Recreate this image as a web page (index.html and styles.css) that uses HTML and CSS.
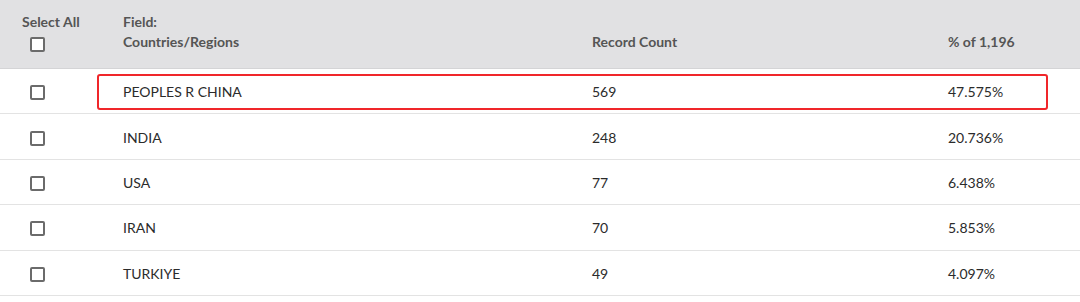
FILE: index.html
```html
<!DOCTYPE html>
<html lang="en">
<head>
<meta charset="utf-8">
<link rel="stylesheet" href="styles.css">
</head>
<body>
<div class="table">
  <div class="head">
    <div class="cell sel">
      <span class="sel-label">Select All</span>
      <span class="box"></span>
    </div>
    <div class="cell">Field:<br>Countries/Regions</div>
    <div class="cell">Record Count</div>
    <div class="cell">% of 1,196</div>
  </div>
  <div class="row highlighted">
    <div class="cell chk"><span class="box"></span></div>
    <div class="cell">PEOPLES R CHINA</div>
    <div class="cell">569</div>
    <div class="cell">47.575%</div>
    <div class="mark"></div>
  </div>
  <div class="row">
    <div class="cell chk"><span class="box"></span></div>
    <div class="cell">INDIA</div>
    <div class="cell">248</div>
    <div class="cell">20.736%</div>
  </div>
  <div class="row">
    <div class="cell chk"><span class="box"></span></div>
    <div class="cell">USA</div>
    <div class="cell">77</div>
    <div class="cell">6.438%</div>
  </div>
  <div class="row">
    <div class="cell chk"><span class="box"></span></div>
    <div class="cell">IRAN</div>
    <div class="cell">70</div>
    <div class="cell">5.853%</div>
  </div>
  <div class="row">
    <div class="cell chk"><span class="box"></span></div>
    <div class="cell">TURKIYE</div>
    <div class="cell">49</div>
    <div class="cell">4.097%</div>
  </div>
</div>
</body>
</html>
```
FILE: styles.css
```css
html, body {
  margin: 0;
  padding: 0;
  background: #ffffff;
}
body {
  font-family: Lato, "Open Sans", "Liberation Sans", sans-serif;
  font-size: 14px;
  color: #2b2b2b;
  width: 1080px;
  height: 302px;
  overflow: hidden;
}
.table {
  display: flex;
  flex-direction: column;
}
.head, .row {
  display: grid;
  grid-template-columns: 123px 469px 356px 1fr;
}
.head {
  background: #e1e1e3;
  height: 69px;
  box-sizing: border-box;
  padding: 12px 0 16px;
  align-items: end;
  border-bottom: 1px solid #d4d4d6;
  color: #555555;
  font-weight: 700;
  line-height: 20px;
}
.sel {
  display: flex;
  flex-direction: column;
  align-self: start;
  padding-left: 22px;
}
.sel .box {
  margin: 5px 0 0 8px;
}
.row {
  position: relative;
  height: 45.4px;
  box-sizing: border-box;
  border-bottom: 1px solid #e3e3e3;
  align-items: center;
  padding-top: 1px;
}
.chk {
  padding-left: 30px;
  display: flex;
  padding-top: 2px;
}
.box {
  display: block;
  width: 15px;
  height: 15px;
  box-sizing: border-box;
  border: 2px solid #6b6b6b;
  border-radius: 2px;
  background: #fff;
}
.mark {
  position: absolute;
  left: 97px;
  top: 5px;
  width: 951px;
  height: 36px;
  box-sizing: border-box;
  border: 2px solid #f0262a;
  border-radius: 3px;
  pointer-events: none;
}
```
